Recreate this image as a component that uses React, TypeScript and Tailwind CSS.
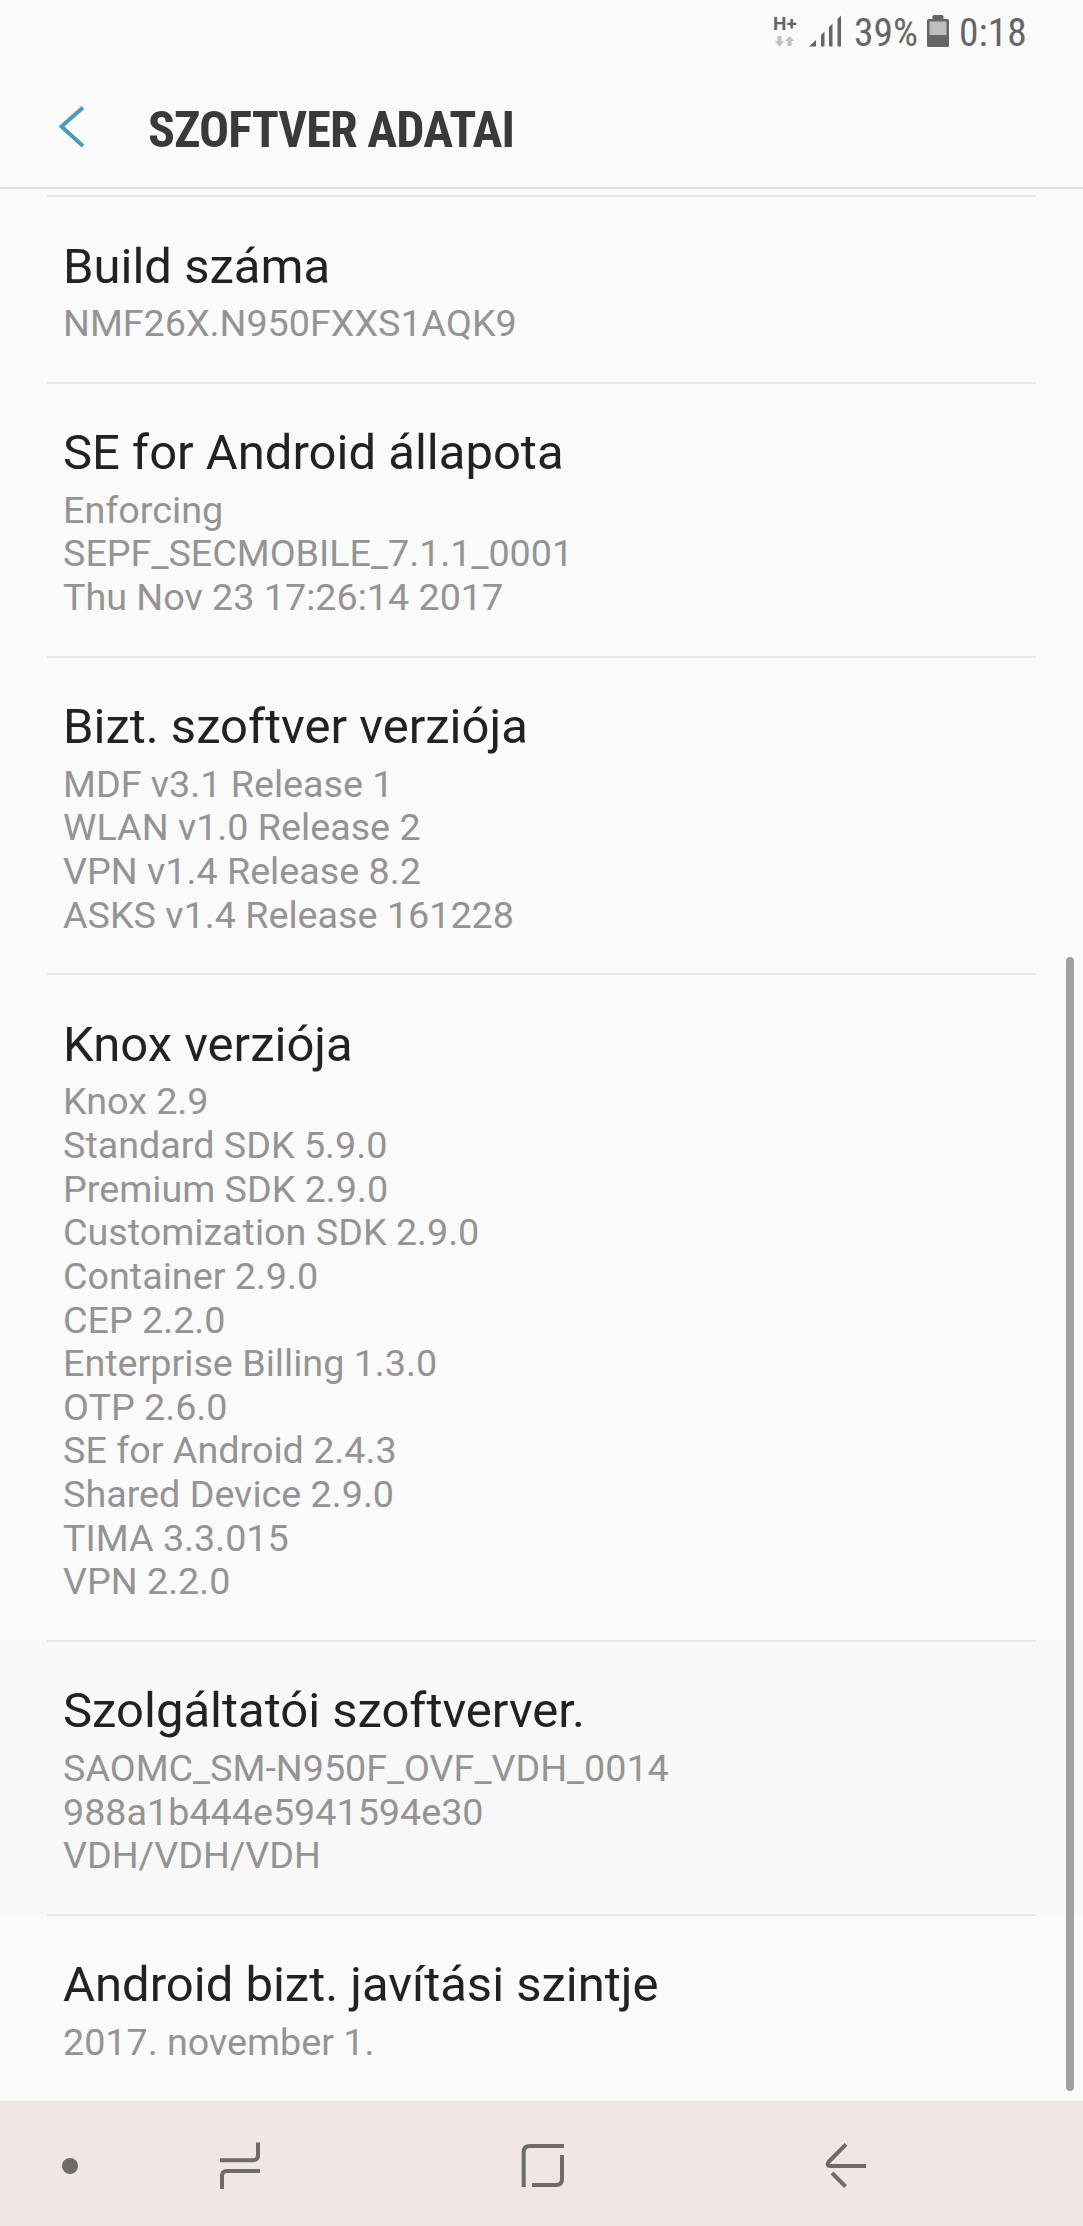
const sections = [
  { title: 'Build száma', lines: ['NMF26X.N950FXXS1AQK9'] },
  {
    title: 'SE for Android állapota',
    lines: ['Enforcing', 'SEPF_SECMOBILE_7.1.1_0001', 'Thu Nov 23 17:26:14 2017'],
  },
  {
    title: 'Bizt. szoftver verziója',
    lines: ['MDF v3.1 Release 1', 'WLAN v1.0 Release 2', 'VPN v1.4 Release 8.2', 'ASKS v1.4 Release 161228'],
  },
  {
    title: 'Knox verziója',
    lines: [
      'Knox 2.9',
      'Standard SDK 5.9.0',
      'Premium SDK 2.9.0',
      'Customization SDK 2.9.0',
      'Container 2.9.0',
      'CEP 2.2.0',
      'Enterprise Billing 1.3.0',
      'OTP 2.6.0',
      'SE for Android 2.4.3',
      'Shared Device 2.9.0',
      'TIMA 3.3.015',
      'VPN 2.2.0',
    ],
  },
  {
    title: 'Szolgáltatói szoftverver.',
    lines: ['SAOMC_SM-N950F_OVF_VDH_0014', '988a1b444e5941594e30', 'VDH/VDH/VDH'],
    pressed: true,
  },
  { title: 'Android bizt. javítási szintje', lines: ['2017. november 1.'] },
];

function StatusBar() {
  return (
    <div className="flex h-[66px] items-start pl-[773px] text-[#666]">
      <div className="w-[36px] pt-[15px]">
        <div className="text-[19px] leading-[18px] font-bold">H+</div>
        <svg className="mt-[3px] ml-[2px]" width="19" height="11" viewBox="0 0 19 11" fill="#c2c2c2">
          <path d="M2.5 0h4v5h2.5L4.5 11 0 5h2.5z" />
          <path d="M12.5 10h4V5H19L14.500 0 10 5h2.500z" />
        </svg>
      </div>
      <svg className="mt-[15px]" width="33" height="32" viewBox="0 0 33 32" fill="currentColor">
        <path d="M0 31.500 7 25v6.500zM12 20l3.500-3.500v15H12zM20 12l3.500-3.500v23H20zM28.500 4 32 .5v31h-3.500z" />
      </svg>
      <span className="mt-[10px] ml-[12px] w-[73px] text-[39.5px] leading-[46px] [font-stretch:75%]">39%</span>
      <svg className="mt-[15px]" width="22" height="32" viewBox="0 0 22 32">
        <path d="M1.500 4H5.500V1.500Q5.500 0 7 0h8q1.500 0 1.500 1.500V4h4Q22 4 22 5.500V30.500Q22 32 20.500 32h-19Q0 32 0 30.500V5.500Q0 4 1.500 4z" fill="#666" />
        <path d="M2.500 6.500h17V20h-17z" fill="#bebebe" />
      </svg>
      <span className="mt-[10px] ml-[10px] text-[39.5px] leading-[46px] [font-stretch:75%]">0:18</span>
    </div>
  );
}

function NavBar() {
  return (
    <nav className="mt-auto flex h-[126px] shrink-0 items-start bg-[#f0e6e5] pt-[39px] text-[#6e6b69]">
      <span className="mt-[18px] ml-[62px] size-4 rounded-full bg-current" />
      <svg className="ml-[140px]" width="44" height="52" viewBox="218 2139 44 52" fill="none" stroke="currentColor" strokeWidth="4">
        <path d="M220 2159.300h33q5 0 5-5V2141.500M260 2170h-33q-5 0-5 5v13" />
      </svg>
      <svg className="ml-[258px]" width="48" height="52" viewBox="520 2139 48 52" fill="none" stroke="currentColor" strokeWidth="4">
        <path d="M523.700 2186v-35q0-6 6-6H564M562 2154v24q0 6-6 6h-24" />
      </svg>
      <svg className="ml-[256px]" width="46" height="52" viewBox="824 2139 46 52" fill="none" stroke="currentColor" strokeWidth="4">
        <path d="M846 2143.300 828.500 2161q-2 4 1.500 4H866M832 2172l13.500 13.500" />
      </svg>
    </nav>
  );
}

export default function App() {
  return (
    <div className="relative flex h-[2226px] w-[1083px] flex-col overflow-hidden bg-[#fafafa] font-[Roboto,sans-serif]">
      <header className="h-[189px] shrink-0 border-b-2 border-[#e3e3e3]">
        <StatusBar />
        <div className="flex items-start pt-[36px] pl-[59px]">
          <svg className="mt-[2px]" width="27" height="46" viewBox="59 104 27 46" fill="none" stroke="#4a9dbb" strokeWidth="4">
            <path d="M83 107.500 61.500 126.500 83 146" />
          </svg>
          <h1 className="ml-[62px] text-[50px] leading-[56px] font-bold tracking-[-0.9px] text-[#3a3a3a] [font-stretch:75%]">
            SZOFTVER ADATAI
          </h1>
        </div>
      </header>
      <main className="pt-[6px]">
        {sections.map((s) => (
          <section key={s.title} className={s.pressed ? 'bg-[#f8f8f8]' : ''}>
            <div className="mx-[47px] border-t-2 border-[#e8e8e8] px-4 pt-[41.6px] pb-[36px]">
              <h2 className="mb-[7.5px] text-[49px] leading-[56px] text-[#222]">{s.title}</h2>
              {s.lines.map((line) => (
                <p key={line} className="text-[37.7px] leading-[43.62px] text-[#949494]">
                  {line}
                </p>
              ))}
            </div>
          </section>
        ))}
      </main>
      <NavBar />
      {/* scrollbar thumb */}
      <div className="absolute top-[957px] right-[9px] h-[1134px] w-2 rounded-full bg-[#9fa1a0]" />
    </div>
  );
}
